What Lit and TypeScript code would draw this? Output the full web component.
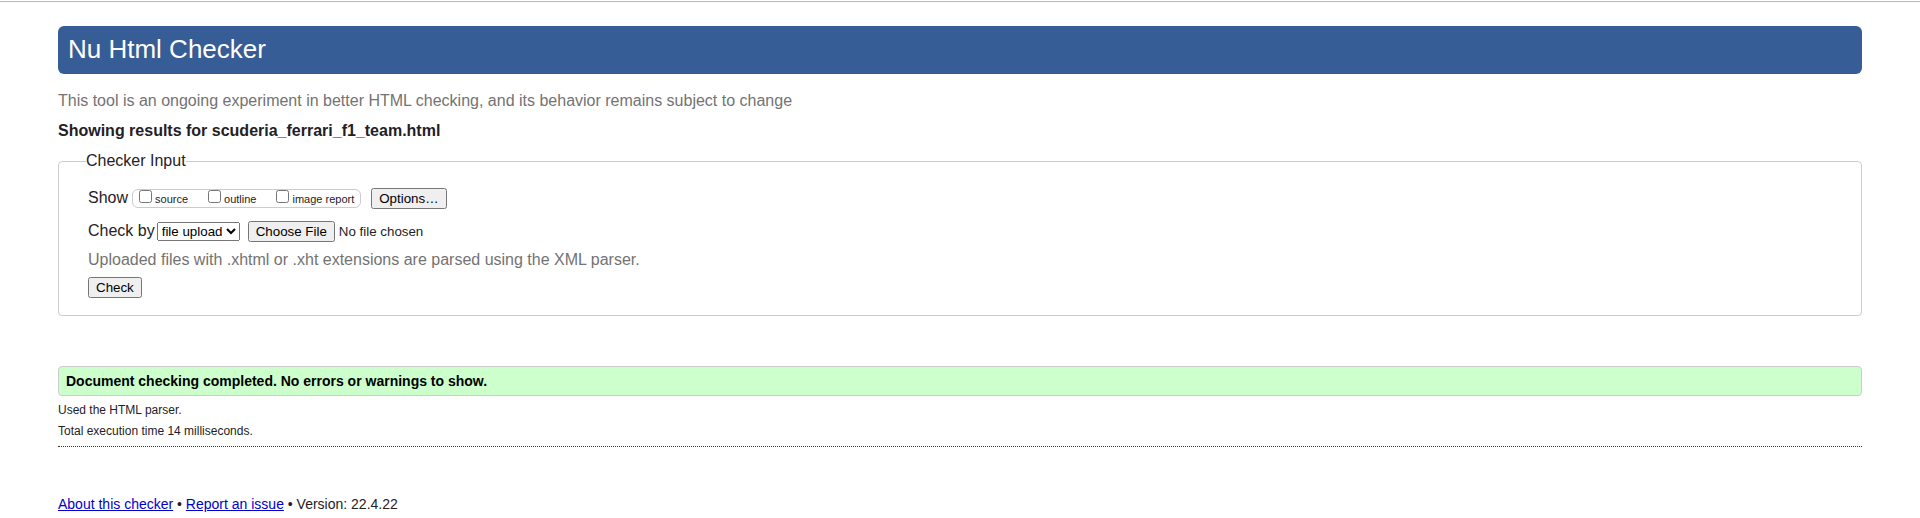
import { LitElement, html, css } from "lit";
import { customElement, state } from "lit/decorators.js";

@customElement("app-root")
export class AppRoot extends LitElement {
  static styles = css`
    :host {
      display: block;
      border-top: 1px solid #fff;
      font-family: "Liberation Sans", Arial, sans-serif;
      font-size: 16px;
      line-height: 20px;
      color: #1f2126;
    }
    .page {
      border-top: 1px solid #b8b8b8;
      padding: 24px 58px 0;
    }
    .title {
      margin: 0;
      padding: 8px 10px 10px;
      border-radius: 6px;
      background: #365d95;
      color: #fff;
      font-size: 26px;
      font-weight: 400;
      line-height: 30px;
    }
    .tagline {
      margin: 17px 0 10px;
      color: #737373;
    }
    .heading {
      margin: 0 0 10px;
      font-size: 16px;
      line-height: 20px;
    }
    .panel {
      margin: 0;
      min-width: 0;
      padding: 17px 29px;
      border: 1px solid #ccc;
      border-radius: 4px;
    }
    .legend {
      margin-left: -2px;
      padding: 0;
    }
    .row {
      display: flex;
      align-items: baseline;
    }
    .show {
      margin-bottom: 12px;
    }
    .options {
      display: flex;
      align-items: baseline;
      gap: 20px;
      box-sizing: border-box;
      height: 19px;
      margin: 0 10px 0 4px;
      padding: 0 6px;
      border: 1px solid #ccc;
      border-radius: 6px;
      font-size: 11px;
      line-height: 16px;
    }
    .option {
      display: flex;
      align-items: baseline;
      gap: 3px;
    }
    .tick {
      width: 13px;
      height: 13px;
      margin: 0;
    }
    .control {
      margin: 0;
      font-family: inherit;
    }
    .method {
      margin: 0 8px 0 2px;
    }
    .hint {
      margin: 8px 0 7px;
      color: #737373;
    }
    .success {
      margin: 50px 0 4px;
      padding: 4px 7px;
      border: 1px solid #ccc;
      border-radius: 4px;
      background: #cfc;
      color: #000;
      font-size: 14px;
      font-weight: 700;
    }
    .details {
      padding-bottom: 4px;
      border-bottom: 1px dotted #333;
      font-size: 12px;
      line-height: 21px;
    }
    .details p {
      margin: 0;
    }
    .footer {
      padding: 47px 0 4px;
      font-size: 14px;
    }
    .footer a {
      color: #00c;
    }
  `;

  @state() private method = "file upload";

  private pickMethod(event: Event) {
    this.method = (event.target as HTMLSelectElement).value;
  }

  render() {
    return html`
      <div class="page">
        <header>
          <h1 class="title">Nu Html Checker</h1>
          <p class="tagline">
            This tool is an ongoing experiment in better HTML checking, and its behavior remains subject to change
          </p>
        </header>
        <main>
          <h2 class="heading">Showing results for scuderia_ferrari_f1_team.html</h2>
          <form @submit=${(event: Event) => event.preventDefault()}>
            <fieldset class="panel">
              <legend class="legend">Checker Input</legend>
              <div class="row show">
                <span>Show</span>
                <div class="options">
                  ${["source", "outline", "image report"].map(
                    (name) => html`<label class="option"><input class="tick" type="checkbox" />${name}</label>`
                  )}
                </div>
                <button class="control" type="button">Options…</button>
              </div>
              <div class="row">
                <label for="method">Check by</label>
                <select class="control method" id="method" .value=${this.method} @change=${this.pickMethod}>
                  <option>file upload</option>
                </select>
                <input class="control" type="file" aria-label="File to check" />
              </div>
              <p class="hint">Uploaded files with .xhtml or .xht extensions are parsed using the XML parser.</p>
              <button class="control" type="submit">Check</button>
            </fieldset>
          </form>
          <p class="success">Document checking completed. No errors or warnings to show.</p>
          <div class="details">
            <p>Used the HTML parser.</p>
            <p>Total execution time 14 milliseconds.</p>
          </div>
        </main>
        <footer class="footer">
          <a href="#about">About this checker</a> • <a href="#issue">Report an issue</a> • Version: 22.4.22
        </footer>
      </div>
    `;
  }
}
